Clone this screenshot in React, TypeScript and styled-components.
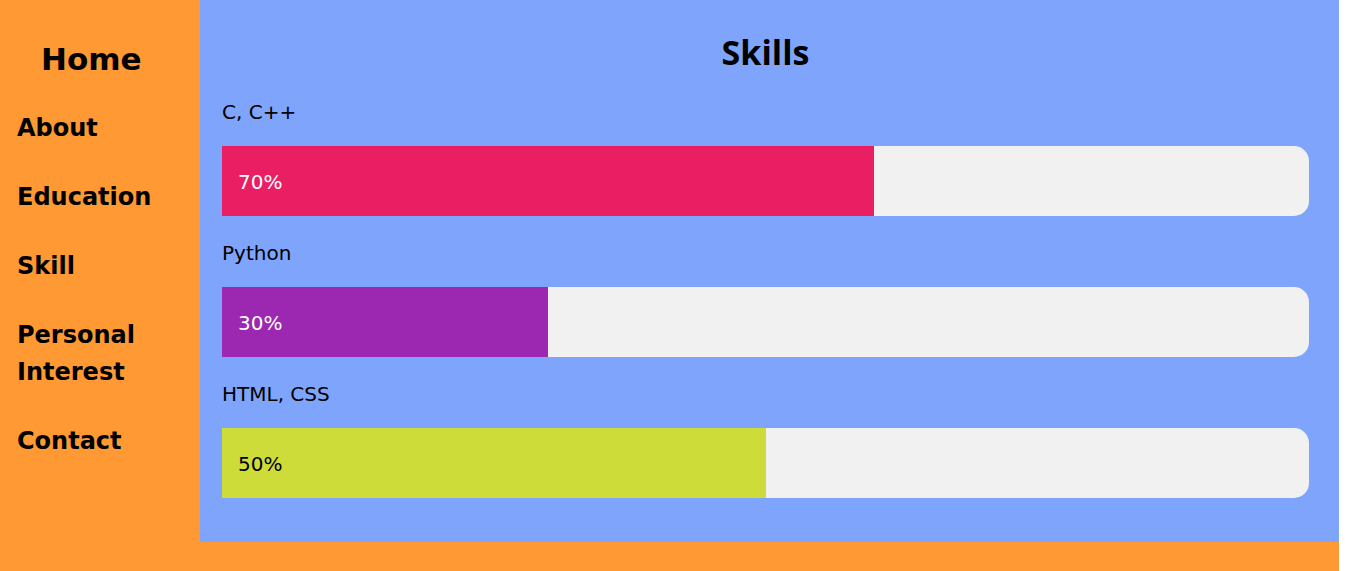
import styled, { createGlobalStyle } from "styled-components";

const GlobalStyle = createGlobalStyle`
  html, body {
    margin: 0;
    padding: 0;
    background: #ffffff;
  }
`;

const Page = styled.div`
  display: flex;
  align-items: flex-start;
  margin-right: 10px;
  min-height: 571px;
  background: #ff9933;
`;

const Sidebar = styled.nav`
  width: 200px;
  flex-shrink: 0;
  display: flex;
  flex-direction: column;
  padding-top: 41px;
  font-family: "DejaVu Sans", Verdana, sans-serif;
  font-weight: 700;
  color: #000;
`;

const HomeLink = styled.a`
  padding-left: 41px;
  font-size: 31px;
  line-height: 36px;
  margin-bottom: 33px;
  color: inherit;
  text-decoration: none;
`;

const NavLink = styled.a`
  padding-left: 17px;
  font-size: 24px;
  line-height: 37px;
  margin-bottom: 32px;
  color: inherit;
  text-decoration: none;
`;

const Main = styled.main`
  flex: 1;
  background: #7fa4fc;
  padding: 32px 30px 44px 22px;
`;

const Title = styled.h1`
  margin: 0 0 29px;
  text-align: center;
  font-family: "Open Sans", sans-serif;
  font-size: 34px;
  line-height: 40px;
  font-weight: 700;
  color: #000;
`;

const SkillGroup = styled.section`
  margin-bottom: 26px;

  &:last-child {
    margin-bottom: 0;
  }
`;

const Label = styled.p`
  margin: 0 0 23px;
  font-family: "DejaVu Sans", Verdana, sans-serif;
  font-size: 20px;
  line-height: 22px;
  color: #000;
`;

const Track = styled.div`
  height: 70px;
  background: #f1f1f1;
  border-radius: 15px;
`;

const Fill = styled.div<{ $color: string; $text: string }>`
  height: 100%;
  box-sizing: border-box;
  display: flex;
  align-items: center;
  padding-left: 16px;
  padding-top: 2px;
  background: ${(p) => p.$color};
  color: ${(p) => p.$text};
  font-family: "DejaVu Sans", Verdana, sans-serif;
  font-size: 20px;
`;

const skills = [
  { name: "C, C++", label: "70%", width: 60, color: "#e91e63", text: "#fff" },
  { name: "Python", label: "30%", width: 30, color: "#9c27b0", text: "#fff" },
  { name: "HTML, CSS", label: "50%", width: 50, color: "#cddc39", text: "#000" },
];

export default function App() {
  return (
    <>
      <GlobalStyle />
      <Page>
        <Sidebar>
          <HomeLink href="#">Home</HomeLink>
          <NavLink href="#">About</NavLink>
          <NavLink href="#">Education</NavLink>
          <NavLink href="#">Skill</NavLink>
          <NavLink href="#">Personal Interest</NavLink>
          <NavLink href="#">Contact</NavLink>
        </Sidebar>
        <Main>
          <Title>Skills</Title>
          {skills.map((s) => (
            <SkillGroup key={s.name}>
              <Label>{s.name}</Label>
              <Track>
                <Fill $color={s.color} $text={s.text} style={{ width: `${s.width}%` }}>
                  {s.label}
                </Fill>
              </Track>
            </SkillGroup>
          ))}
        </Main>
      </Page>
    </>
  );
}
